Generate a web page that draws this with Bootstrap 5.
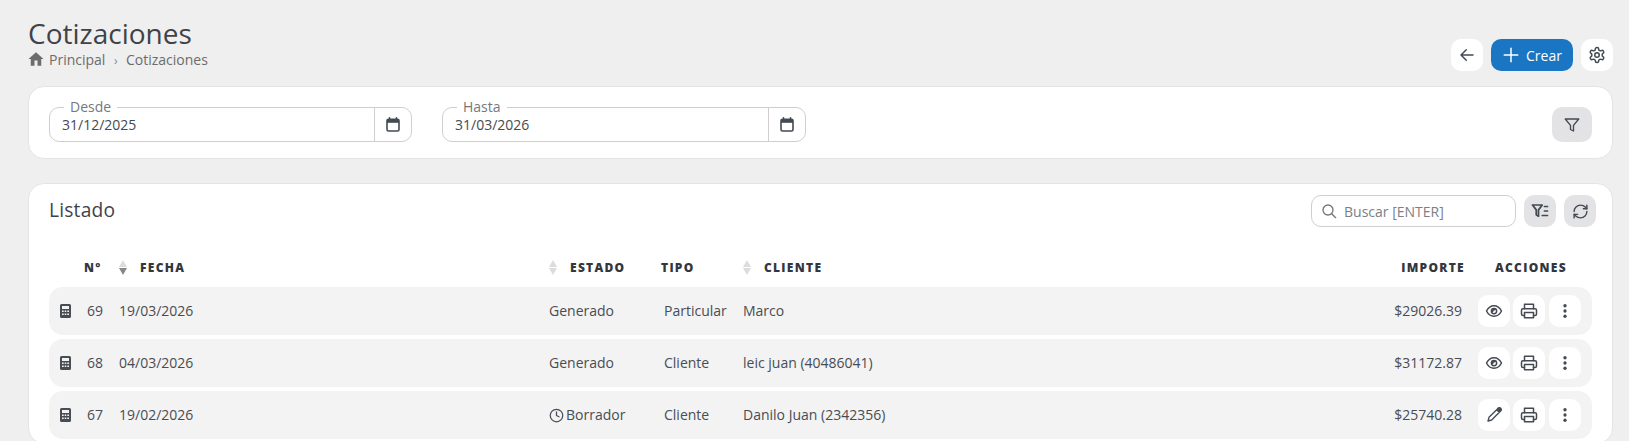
<!DOCTYPE html>
<html lang="es">
<head>
<meta charset="utf-8">
<title>Cotizaciones</title>
<link href="https://cdn.jsdelivr.net/npm/bootstrap@5.3.0/dist/css/bootstrap.min.css" rel="stylesheet">
<style>
html,body{height:100%;overflow:hidden}
body{background:#efefef;font-family:"Open Sans",sans-serif;font-size:14px;color:#444a52}
.shell{padding:17px 17px 0 28px;height:100vh;display:flex;flex-direction:column}
.ptitle{font-size:28px;line-height:34px;font-weight:400;color:#3f4348;margin:-1px 0 0}
.crumbs{font-size:14px;line-height:20px;color:#6c6c6c;margin-top:0;margin-left:-1px}
.crumbs svg{width:18px;height:18px;fill:#6c6c6c;margin-right:4px;vertical-align:-3px}
.crumbs i{font-style:normal;margin:0 8.5px;font-size:12px;color:#888}
.headbar{height:69px}
.headtools{margin-top:22px;margin-right:-1px}
.tool{width:32px;height:32px;padding:0;border:0;border-radius:10px;background:#fff;display:inline-flex;align-items:center;justify-content:center;color:#444a52}
.tool:hover{background:#fff;color:#444a52}
.tool svg{width:18px;height:18px;fill:none;stroke:currentColor;stroke-width:2;stroke-linecap:round;stroke-linejoin:round}
.tool.gray{background:#e3e3e5}
.tool.gray:hover{background:#e3e3e5}
.tool.wide{width:40px;height:35px}
.newbtn{width:82px;height:32px;padding:0;border:0;border-radius:10px;background:#1a76c2;color:#fff;font-size:14px;font-weight:500;display:inline-flex;align-items:center;justify-content:center;gap:6px}
.newbtn:hover{background:#1a76c2;color:#fff}
.newbtn svg{width:18px;height:18px;fill:none;stroke:#fff;stroke-width:2;stroke-linecap:round}
.panel{background:#fff;border:1px solid #e4e4e4;border-radius:16px}
.filters{height:73px;padding:20px 20px 0 20px;margin-right:-1px}
.dategroup{gap:30px}
.datebox{position:relative;width:363px;height:35px;display:flex;border:1px solid #cfcfcf;border-radius:10px;background:#fff}
.datebox + .datebox{width:364px}
.datebox .val{flex:1;padding-left:12px;line-height:33px;color:#444a52}
.datebox .cal{width:37px;border-left:1px solid #cfcfcf;display:flex;align-items:center;justify-content:center}
.datebox .cal svg{width:14px;height:15px}
.floatlab{position:absolute;left:14px;top:-10px;padding:0 6px;background:#fff;font-size:14px;line-height:18px;color:#75797e}
.listing{flex:1;margin-top:24px;margin-right:-1px;padding:11px 20px 0 20px}
.listhead{height:32px;margin-right:-4px}
.listname{font-size:19.2px;line-height:28px;color:#3f4348;margin:-2px 0 0;letter-spacing:.2px}
.searchbox{width:205px;height:32px;border:1px solid #cfcfcf;border-radius:10px;display:flex;align-items:center;padding-left:9px;gap:7px;color:#7a8086}
.searchbox svg{width:16px;height:16px;fill:none;stroke:#777;stroke-width:2;stroke-linecap:round}
.quotes{width:1543px;table-layout:fixed;border-collapse:separate;border-spacing:0 4px;margin-top:22px}
.quotes th{height:30px;padding:0;font-size:12px;font-weight:800;letter-spacing:1.3px;color:#33373d;white-space:nowrap;vertical-align:middle}
.quotes td{height:48px;padding:0;background:#f3f3f3;white-space:nowrap;vertical-align:middle;color:#484d54}
.quotes td:not(:first-child):not(:last-child){padding-bottom:2px}
.quotes td:first-child{border-radius:14px 0 0 14px;padding-left:11px}
.quotes td:last-child{border-radius:0 14px 14px 0}
.c1{width:31px}.c2{width:30px}.c3{width:430px}.c4{width:115px}.c5{width:80px}.c6{width:645px}.c7{width:90px}.c8{width:122px}
.sorter{display:inline-block;width:8px;height:15px;margin-right:13px;vertical-align:middle;position:relative;top:-1px}
.sorter b{display:block;width:0;height:0;border-left:4px solid transparent;border-right:4px solid transparent}
.sorter b:first-child{border-bottom:7px solid #dcdcdc;margin-bottom:1px}
.sorter b:last-child{border-top:7px solid #dcdcdc}
.sorter.desc b:last-child{border-top-color:#85878b}
.calc{width:11px;height:14px;fill:#484d54;display:block}
.stamp{width:15px;height:15px;fill:none;stroke:#484d54;stroke-width:2;stroke-linecap:round;stroke-linejoin:round;vertical-align:-3px;margin-right:2px}
.pad-n{padding-left:7px!important}.pad-nh{padding-left:4px!important}
.pad-f{padding-left:9px!important}.pad-e{padding-left:9px!important}
.pad-eh{padding-left:9px!important}
.pad-t{padding-left:9px!important}.pad-th{padding-left:6px!important}
.pad-c{padding-left:8px!important}.pad-ch{padding-left:8px!important}
.amt{text-align:right;padding-right:8px!important}.amth{text-align:right;padding-right:5px!important}
.acth{text-align:center}
.rowacts{display:flex;gap:3px;padding-left:8px}
.rowacts .tool:nth-child(2){margin-right:1px}
.rowacts .pen{width:16px;height:16px}
.thin{stroke-width:1.800!important}
.fil{stroke-width:2.300!important}
.ref{width:17px!important;height:17px!important}
</style>
</head>
<body>
<svg width="0" height="0" class="d-none">
<symbol id="i-cal" viewBox="0 0 14 15"><path d="M3.5.8v2M10.500.8v2" stroke="#444a52" stroke-width="1.6" fill="none" stroke-linecap="round"/><rect x="1" y="2.300" width="12" height="11.700" rx="1.500" fill="none" stroke="#444a52" stroke-width="1.600"/><rect x="1" y="2.300" width="12" height="3.500" fill="#444a52"/></symbol>
<symbol id="i-eye" viewBox="0 0 24 24"><path d="M2 12s3.600-7 10-7 10 7 10 7-3.600 7-10 7-10-7-10-7z"/><circle cx="12" cy="12" r="3.500"/><path d="M10 12.500a2.200 2.200 0 0 1 2.500-2.500" stroke-width="2.500"/></symbol>
<symbol id="i-print" viewBox="0 0 24 24"><path d="M6 9V3h12v6"/><path d="M6 18H4a2 2 0 0 1-2-2v-5a2 2 0 0 1 2-2h16a2 2 0 0 1 2 2v5a2 2 0 0 1-2 2h-2"/><rect x="6" y="14" width="12" height="7"/></symbol>
<symbol id="i-dots" viewBox="0 0 24 24"><circle cx="12" cy="5" r="2.200" fill="currentColor" stroke="none"/><circle cx="12" cy="12" r="2.200" fill="currentColor" stroke="none"/><circle cx="12" cy="19" r="2.200" fill="currentColor" stroke="none"/></symbol>
<symbol id="i-pen" viewBox="0 0 24 24"><path d="M3 21l1.500-5.500L16 4l4 4L8.500 19.500z"/><path d="M17 3l1-1a2 2 0 0 1 4 4l-1 1z" fill="currentColor"/></symbol>
<symbol id="i-calc" viewBox="0 0 11 14"><path fill-rule="evenodd" d="M1.500 0h8A1.500 1.500 0 0 1 11 1.500v11A1.500 1.500 0 0 1 9.500 14h-8A1.500 1.500 0 0 1 0 12.500v-11A1.500 1.500 0 0 1 1.500 0zM2 2v3h7V2zM2 6.500V8h1.700V6.500zm2.700 0V8h1.600V6.500zm2.600 0V8H9V6.500zM2 9.500V11h1.700V9.500zm2.700 0V11h1.600V9.500zm2.600 0V11H9V9.500z"/></symbol>
</svg>
<div class="shell">
  <header class="headbar d-flex justify-content-between flex-shrink-0">
    <div>
      <h1 class="ptitle">Cotizaciones</h1>
      <div class="crumbs"><svg viewBox="0 0 24 24"><path d="M10 21v-7h4v7h5v-9h3L12 3 2 12h3v9z"/></svg>Principal<i>›</i>Cotizaciones</div>
    </div>
    <div class="headtools d-flex gap-2 align-self-start">
      <button class="btn tool" type="button" aria-label="Volver"><svg viewBox="0 0 24 24"><path d="M20 12H4M11 5l-7 7 7 7"/></svg></button>
      <button class="btn newbtn" type="button"><svg viewBox="0 0 24 24"><path d="M12 3v18M3 12h18"/></svg>Crear</button>
      <button class="btn tool" type="button" aria-label="Ajustes"><svg viewBox="0 0 24 24"><path d="M12.220 2h-.44a2 2 0 0 0-2 2v.18a2 2 0 0 1-1 1.730l-.43.25a2 2 0 0 1-2 0l-.15-.08a2 2 0 0 0-2.730.73l-.22.38a2 2 0 0 0 .73 2.730l.15.1a2 2 0 0 1 1 1.720v.51a2 2 0 0 1-1 1.740l-.15.09a2 2 0 0 0-.73 2.730l.22.38a2 2 0 0 0 2.730.73l.15-.08a2 2 0 0 1 2 0l.43.25a2 2 0 0 1 1 1.730V20a2 2 0 0 0 2 2h.44a2 2 0 0 0 2-2v-.18a2 2 0 0 1 1-1.730l.43-.25a2 2 0 0 1 2 0l.15.08a2 2 0 0 0 2.730-.73l.22-.39a2 2 0 0 0-.73-2.730l-.15-.08a2 2 0 0 1-1-1.740v-.5a2 2 0 0 1 1-1.740l.15-.09a2 2 0 0 0 .73-2.730l-.22-.38a2 2 0 0 0-2.730-.73l-.15.08a2 2 0 0 1-2 0l-.43-.25a2 2 0 0 1-1-1.730V4a2 2 0 0 0-2-2z"/><circle cx="12" cy="12" r="3"/></svg></button>
    </div>
  </header>

  <section class="panel filters d-flex flex-shrink-0 justify-content-between">
    <div class="dategroup d-flex">
      <div class="datebox"><span class="floatlab">Desde</span><span class="val">31/12/2025</span><span class="cal"><svg><use href="#i-cal"/></svg></span></div>
      <div class="datebox"><span class="floatlab">Hasta</span><span class="val">31/03/2026</span><span class="cal"><svg><use href="#i-cal"/></svg></span></div>
    </div>
    <button class="btn tool gray wide" type="button" aria-label="Filtros"><svg class="thin" viewBox="0 0 24 24"><path d="M3 4h18l-7 8.500V20l-4-2v-5.500z"/></svg></button>
  </section>

  <section class="panel listing">
    <div class="listhead d-flex justify-content-between align-items-center">
      <h2 class="listname">Listado</h2>
      <div class="d-flex gap-2">
        <div class="searchbox"><svg viewBox="0 0 24 24"><circle cx="10.500" cy="10.500" r="7.500"/><path d="M16 16l6 6"/></svg><span>Buscar [ENTER]</span></div>
        <button class="btn tool gray" type="button" aria-label="Filtrar"><svg class="fil" viewBox="0 0 24 24"><path d="M2 4h13l-5 6.500V19l-3-2v-6.500z"/><path d="M18 6h4M18 12h4M15 18h7"/></svg></button>
        <button class="btn tool gray" type="button" aria-label="Actualizar"><svg class="ref" viewBox="0 0 24 24"><path d="M3 12a9 9 0 0 1 9-9 9.750 9.750 0 0 1 6.740 2.740L21 8"/><path d="M21 3v5h-5"/><path d="M21 12a9 9 0 0 1-9 9 9.750 9.750 0 0 1-6.740-2.740L3 16"/><path d="M8 16H3v5"/></svg></button>
      </div>
    </div>
    <table class="quotes">
      <colgroup><col class="c1"><col class="c2"><col class="c3"><col class="c4"><col class="c5"><col class="c6"><col class="c7"><col class="c8"></colgroup>
      <thead><tr>
        <th></th>
        <th class="pad-nh">N°</th>
        <th class="pad-f"><span class="sorter desc"><b></b><b></b></span>FECHA</th>
        <th class="pad-eh"><span class="sorter"><b></b><b></b></span>ESTADO</th>
        <th class="pad-th">TIPO</th>
        <th class="pad-ch"><span class="sorter"><b></b><b></b></span>CLIENTE</th>
        <th class="amth">IMPORTE</th>
        <th class="acth">ACCIONES</th>
      </tr></thead>
      <tbody>
        <tr>
          <td><svg class="calc"><use href="#i-calc"/></svg></td><td class="pad-n">69</td><td class="pad-f">19/03/2026</td><td class="pad-e">Generado</td><td class="pad-t">Particular</td><td class="pad-c">Marco</td><td class="amt">$29026.39</td>
          <td><div class="rowacts"><button class="btn tool" type="button" aria-label="Ver"><svg><use href="#i-eye"/></svg></button><button class="btn tool" type="button" aria-label="Imprimir"><svg><use href="#i-print"/></svg></button><button class="btn tool" type="button" aria-label="Más"><svg><use href="#i-dots"/></svg></button></div></td>
        </tr>
        <tr>
          <td><svg class="calc"><use href="#i-calc"/></svg></td><td class="pad-n">68</td><td class="pad-f">04/03/2026</td><td class="pad-e">Generado</td><td class="pad-t">Cliente</td><td class="pad-c">leic juan (40486041)</td><td class="amt">$31172.87</td>
          <td><div class="rowacts"><button class="btn tool" type="button" aria-label="Ver"><svg><use href="#i-eye"/></svg></button><button class="btn tool" type="button" aria-label="Imprimir"><svg><use href="#i-print"/></svg></button><button class="btn tool" type="button" aria-label="Más"><svg><use href="#i-dots"/></svg></button></div></td>
        </tr>
        <tr>
          <td><svg class="calc"><use href="#i-calc"/></svg></td><td class="pad-n">67</td><td class="pad-f">19/02/2026</td><td class="pad-e"><svg class="stamp" viewBox="0 0 24 24"><circle cx="12" cy="12" r="10"/><path d="M12 6v6l4 2"/></svg>Borrador</td><td class="pad-t">Cliente</td><td class="pad-c">Danilo Juan (2342356)</td><td class="amt">$25740.28</td>
          <td><div class="rowacts"><button class="btn tool" type="button" aria-label="Editar"><svg class="pen"><use href="#i-pen"/></svg></button><button class="btn tool" type="button" aria-label="Imprimir"><svg><use href="#i-print"/></svg></button><button class="btn tool" type="button" aria-label="Más"><svg><use href="#i-dots"/></svg></button></div></td>
        </tr>
      </tbody>
    </table>
  </section>
</div>
<script src="https://cdn.jsdelivr.net/npm/bootstrap@5.3.0/dist/js/bootstrap.bundle.min.js"></script>
</body>
</html>
